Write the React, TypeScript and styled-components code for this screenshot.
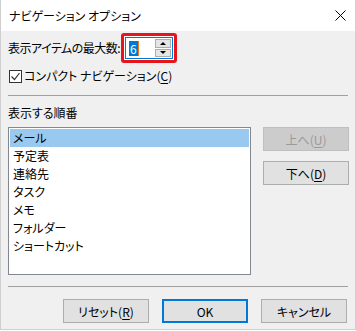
import React from 'react';
import styled, { createGlobalStyle } from 'styled-components';

const GlobalStyle = createGlobalStyle`
  html, body {
    margin: 0;
    padding: 0;
    background: #ffffff;
  }
  body {
    font-family: "Noto Sans CJK JP", "Noto Sans", sans-serif;
    font-size: 12px;
    color: #000;
    font-feature-settings: "palt";
  }
`;

const Window = styled.div`
  width: 356px;
  height: 330px;
  box-sizing: border-box;
  background: #f0f0f0;
  border: 1px solid #cfcfcf;
  border-top: none;
  display: flex;
  flex-direction: column;
`;

const TitleBar = styled.div`
  height: 31px;
  flex: none;
  background: #ffffff;
  display: flex;
  align-items: center;
  justify-content: space-between;
  padding: 0 9px 0 8px;
  line-height: 16px;
`;

const Body = styled.div`
  padding: 0 7px;
  display: flex;
  flex-direction: column;
`;

const MaxRow = styled.div`
  margin-top: 2px;
  height: 30px;
  display: flex;
  align-items: center;
  gap: 1px;
  line-height: 16px;
`;

const MaxLabel = styled.span`
  letter-spacing: -0.5px;
`;

const Highlight = styled.div`
  border: 3px solid #e8141b;
  border-radius: 3px;
  padding: 1px;
  background: #ffffff;
  display: flex;
`;

const SpinBox = styled.div`
  width: 46px;
  height: 20px;
  border: 1px solid #0078d7;
  display: flex;
  align-items: stretch;
  background: #ffffff;
`;

const SpinText = styled.div`
  flex: 1;
  display: flex;
  align-items: center;
  padding-left: 3px;
`;

const Selected = styled.span`
  background: #0078d7;
  color: #ffffff;
  line-height: 15px;
  padding: 0 1px;
`;

const Caret = styled.span`
  width: 1px;
  height: 15px;
  background: #e87a1c;
`;

const SpinButtons = styled.div`
  width: 16px;
  display: flex;
  flex-direction: column;
  gap: 1px;
  padding: 1px 1px 1px 0;
`;

const SpinButton = styled.div<{ $dir: 'up' | 'down' }>`
  flex: 1;
  background: #e5e5e5;
  border: 1px solid #adadad;
  display: flex;
  align-items: center;
  justify-content: center;
  &::after {
    content: '';
    width: 0;
    height: 0;
    border-left: 3px solid transparent;
    border-right: 3px solid transparent;
    ${p => p.$dir === 'up' ? 'border-bottom: 3px solid #000;' : 'border-top: 3px solid #000;'}
  }
`;

const CheckRow = styled.label`
  margin-top: 5px;
  height: 16px;
  display: flex;
  align-items: center;
  gap: 2px;
  line-height: 16px;
`;

const CheckBox = styled.span`
  width: 11px;
  height: 11px;
  border: 1px solid #333333;
  background: #ffffff;
  margin-left: 1px;
  display: flex;
  align-items: center;
  justify-content: center;
`;

const Separator = styled.div<{ $top: number }>`
  margin-top: ${p => p.$top}px;
  height: 1px;
  background: #a0a0a0;
  flex: none;
`;

const SectionLabel = styled.div`
  margin-top: 9px;
  height: 16px;
  line-height: 16px;
`;

const Content = styled.div`
  margin-top: 6px;
  display: flex;
  gap: 12px;
  align-items: flex-start;
`;

const ListBox = styled.ul`
  list-style: none;
  margin: 0;
  padding: 1px;
  width: 239px;
  height: 144px;
  background: #ffffff;
  border: 1px solid #828790;
  flex: none;
`;

const ListItem = styled.li<{ $selected?: boolean }>`
  height: 18px;
  line-height: 18px;
  padding-left: 3px;
  background: ${p => (p.$selected ? '#99c9ef' : 'transparent')};
`;

const SideButtons = styled.div`
  display: flex;
  flex-direction: column;
  gap: 10px;
`;

const Button = styled.button<{ $default?: boolean }>`
  width: 86px;
  height: 24px;
  box-sizing: border-box;
  padding: 0;
  font-family: inherit;
  font-size: 12px;
  font-feature-settings: "palt";
  color: #000;
  background: #e1e1e1;
  border: ${p => (p.$default ? '2px solid #0078d7' : '1px solid #adadad')};
  &:disabled {
    background: #cccccc;
    border-color: #bfbfbf;
    color: #9a9a9a;
  }
`;

const Footer = styled.div`
  margin-top: 12px;
  display: flex;
  justify-content: flex-end;
  gap: 13px;
  padding-right: 1px;
`;

const Key = styled.span`
  text-decoration: underline;
  text-underline-offset: 2px;
`;

const items = ['メール', '予定表', '連絡先', 'タスク', 'メモ', 'フォルダー', 'ショートカット'];

export default function App() {
  return (
    <>
      <GlobalStyle />
      <Window>
        <TitleBar>
          <span>ナビゲーション オプション</span>
          <svg width="11" height="11" viewBox="0 0 11 11">
            <path d="M0.5 0.5 L10.5 10.5 M10.5 0.5 L0.5 10.5" stroke="#000" strokeWidth="1" fill="none" />
          </svg>
        </TitleBar>
        <Body>
          <MaxRow>
            <MaxLabel>表示アイテムの最大数:</MaxLabel>
            <Highlight>
              <SpinBox>
                <SpinText>
                  <Selected>6</Selected>
                  <Caret />
                </SpinText>
                <SpinButtons>
                  <SpinButton $dir="up" />
                  <SpinButton $dir="down" />
                </SpinButtons>
              </SpinBox>
            </Highlight>
          </MaxRow>
          <CheckRow>
            <CheckBox>
              <svg width="9" height="9" viewBox="0 0 9 9">
                <polyline points="0.5,4.5 3.5,7.5 8.5,1" stroke="#333" strokeWidth="1.2" fill="none" />
              </svg>
            </CheckBox>
            <span>
              コンパクト ナビゲーション(<Key>C</Key>)
            </span>
          </CheckRow>
          <Separator $top={11} />
          <SectionLabel>表示する順番</SectionLabel>
          <Content>
            <ListBox>
              {items.map((item, i) => (
                <ListItem key={item} $selected={i === 0}>
                  {item}
                </ListItem>
              ))}
            </ListBox>
            <SideButtons>
              <Button disabled>
                上へ(<Key>U</Key>)
              </Button>
              <Button>
                下へ(<Key>D</Key>)
              </Button>
            </SideButtons>
          </Content>
          <Separator $top={11} />
          <Footer>
            <Button>
              リセット(<Key>R</Key>)
            </Button>
            <Button $default>OK</Button>
            <Button>キャンセル</Button>
          </Footer>
        </Body>
      </Window>
    </>
  );
}
